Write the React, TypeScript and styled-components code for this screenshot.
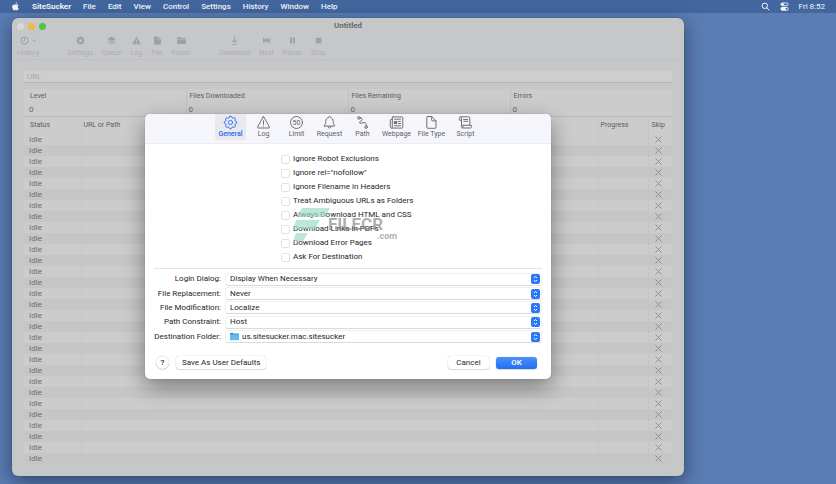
import React from "react";
import styled, { createGlobalStyle, css } from "styled-components";
import { FaApple } from "react-icons/fa";

const GlobalStyle = createGlobalStyle`
  *, *::before, *::after { box-sizing: border-box; }
  body { margin: 0; background: #5a7db3; }
  body, button, input, select, table {
    font-family: Roboto, "Liberation Sans", sans-serif;
    font-size: 8px;
    line-height: 10px;
  }
  button, input, select { margin: 0; padding: 0; border: 0; background: none; color: inherit; }
  svg { display: block; flex: none; }
`;

const Desktop = styled.div`
  min-height: 100vh;
  display: flex;
  flex-direction: column;
  background: #5a7db3;
  overflow: hidden;
`;

const MenuBar = styled.nav`
  height: 13px;
  display: flex;
  align-items: center;
  gap: 12px;
  padding: 0 11px;
  background: #42679f;
  color: #f4f7fc;
`;

const MenuItem = styled.button<{ $strong?: boolean }>`
  font-weight: ${(p) => (p.$strong ? 700 : 500)};
  white-space: nowrap;
`;

const MenuStatus = styled.div`
  margin-left: auto;
  display: flex;
  align-items: center;
  gap: 10px;
`;

const Clock = styled.time`
  font-weight: 400;
`;

const Workspace = styled.main`
  flex: 1;
  display: flex;
  padding: 5px 152px 8px 12px;
`;

const AppWindow = styled.section`
  position: relative;
  flex: 1;
  min-width: 0;
  display: flex;
  flex-direction: column;
  border-radius: 6px;
  background: #c6c7c9;
  color: #6a6a6b;
  box-shadow: 0 0 1px rgba(0, 0, 0, 0.5), 0 6px 20px rgba(15, 25, 50, 0.55);
`;

const TitleBar = styled.header`
  height: 16px;
  display: grid;
  grid-template-columns: 1fr auto 1fr;
  align-items: center;
  padding: 0 5px;
`;

const TrafficLights = styled.div`
  display: flex;
  gap: 4px;
`;

const Light = styled.button<{ $color: string }>`
  width: 7px;
  height: 7px;
  border-radius: 50%;
  background: ${(p) => p.$color};
`;

const WindowTitle = styled.h1`
  margin: 0;
  font-size: 8px;
  font-weight: 700;
  line-height: 10px;
  color: #69696b;
`;

const Toolbar = styled.div`
  height: 26px;
  display: flex;
  gap: 28px;
  padding: 0 5px;
  border-bottom: 1px solid #bfc0c1;
`;

const ToolGroup = styled.div`
  display: flex;
  gap: 9px;
`;

const Tool = styled.button`
  display: flex;
  flex-direction: column;
  align-items: center;
  justify-content: center;
  gap: 4px;
  font-size: 7px;
  line-height: 9px;
  color: #adaeaf;
  svg { color: #9fa0a1; }
`;

const Content = styled.div`
  display: flex;
  flex-direction: column;
  padding: 11px 12px 12px;
`;

const UrlInput = styled.input`
  height: 12px;
  margin-bottom: 6px;
  padding: 0 3px;
  background: #cecece;
  border-bottom: 1px solid #b6b6b6;
  color: #666;
  &::placeholder { color: #a9a9a9; opacity: 1; }
`;

const DataTable = styled.table`
  width: 100%;
  table-layout: fixed;
  border-collapse: collapse;
  background: #cccccc;
  th, td {
    padding: 0 6px;
    text-align: left;
    white-space: nowrap;
  }
  th { font-size: 7px; font-weight: 400; line-height: 11px; color: #5c5c5c; }
`;

const SummaryTable = styled(DataTable)`
  border-bottom: 1px solid #b8b8b8;
  th { height: 15px; }
  td { height: 12px; padding-left: 5px; }
  th + th, td + td { border-left: 1px solid #c1c1c1; padding-left: 3px; }
  td + td { padding-left: 2px; }
`;

const FilesTable = styled(DataTable)`
  th { height: 17px; }
  td { height: 11px; padding-left: 5px; line-height: 11px; color: #6c6c6c; }
  th + th, td + td { border-left: 1px solid #c5c5c5; padding-left: 2px; }
  th:last-child { padding: 0 3px; }
  td:last-child { padding-left: 5px; }
  tbody tr:nth-child(even) { background: #c6c6c6; }
`;

const StatusCol = styled.col`width: 57px;`;
const ProgressCol = styled.col`width: 50px;`;
const SkipCol = styled.col`width: 24px;`;

const SkipButton = styled.button`
  display: block;
  width: 9px;
  height: 9px;
  color: #8f8f8f;
`;

const Sheet = styled.div`
  position: absolute;
  top: 96px;
  left: 50%;
  transform: translateX(-50%);
  width: 406px;
  border-radius: 5px;
  background: #fff;
  color: #262626;
  box-shadow: 0 0 1px rgba(0, 0, 0, 0.4), 0 8px 22px rgba(0, 0, 0, 0.4);
`;

const Tabs = styled.div`
  height: 30px;
  display: flex;
  justify-content: center;
  align-items: flex-start;
  gap: 2px;
  border-bottom: 1px solid #ececf0;
  border-radius: 5px 5px 0 0;
  background: #f5f6fb;
`;

const Tab = styled.button<{ $wide?: boolean }>`
  width: ${(p) => (p.$wide ? 33 : 31)}px;
  height: 26px;
  display: flex;
  flex-direction: column;
  align-items: center;
  justify-content: flex-end;
  padding-bottom: 1px;
  border-radius: 0 0 3px 3px;
  font-size: 7px;
  font-weight: 400;
  line-height: 9px;
  white-space: nowrap;
  color: #5f5f63;
  svg { color: #606165; }
  &[aria-selected="true"] {
    background: #e9eaef;
    color: #2467e8;
    font-weight: 500;
    svg { color: #2467e8; }
  }
`;

const Panel = styled.div`
  display: flex;
  flex-direction: column;
  padding: 8px 9px 10px;
`;

const Checks = styled.div`
  position: relative;
  align-self: flex-start;
  margin-left: 127px;
`;

const CheckRow = styled.label`
  height: 14px;
  display: flex;
  align-items: center;
  gap: 3px;
  white-space: nowrap;
`;

const CheckBox = styled.input`
  appearance: none;
  width: 9px;
  height: 9px;
  border: 1px solid #e2e2e2;
  border-radius: 2px;
  background: #fff;
  &:checked { background: #2d7bf6; }
`;

const Watermark = styled.div`
  position: absolute;
  top: 56px;
  left: 12px;
  display: flex;
  pointer-events: none;
  color: rgba(120, 120, 120, 0.6);
`;

const WatermarkText = styled.div`
  margin: 6px 0 0 -2px;
  display: flex;
  flex-direction: column;
  font-size: 17px;
  font-weight: 700;
  line-height: 20px;
`;

const WatermarkSuffix = styled.span`
  align-self: flex-end;
  margin: -3px -14px 0 0;
  font-size: 9px;
  line-height: 10px;
`;

const Options = styled.div`
  height: 77px;
  display: grid;
  grid-auto-rows: 1fr;
  margin-top: 4px;
  padding: 3px 0 1px;
  border-top: 1px solid #e4e4e4;
`;

const Option = styled.div`
  display: grid;
  grid-template-columns: 67px 1fr;
  align-items: center;
  gap: 4px;
`;

const OptionLabel = styled.label`
  text-align: right;
  white-space: nowrap;
`;

const SelectBox = styled.div`
  height: 13px;
  display: flex;
  align-items: center;
  padding: 0 1px 0 4px;
  border: 1px solid #f0f0f0;
  border-bottom-color: #d9d9d9;
  border-radius: 3px;
  gap: 3px;
`;

const Select = styled.select`
  appearance: none;
  flex: 1;
  min-width: 0;
  height: 11px;
  outline: none;
`;

const Stepper = styled.span`
  width: 9px;
  height: 10px;
  display: grid;
  place-items: center;
  border-radius: 2px;
  background: #2b79f5;
  color: #fff;
`;

const Actions = styled.footer`
  display: flex;
  align-items: center;
  gap: 7px;
  margin-top: 11px;
  padding: 0 5px 0 2px;
`;

const PushButton = styled.button<{ $primary?: boolean }>`
  height: 13px;
  min-width: 41px;
  padding: 0 6px;
  border-radius: 3px;
  white-space: nowrap;
  box-shadow: 0 0 1px rgba(0, 0, 0, 0.35), 0 1px 1px rgba(0, 0, 0, 0.12);
  ${(p) =>
    p.$primary &&
    css`
      height: 12px;
      background: linear-gradient(#4a91fa, #226ff2);
      color: #fff;
      font-weight: 500;
    `}
`;

const HelpButton = styled(PushButton)`
  width: 13px;
  min-width: 0;
  padding: 0;
  border-radius: 50%;
  font-weight: 500;
`;

const Spacer = styled.span`flex: 1;`;

type IconProps = { children: React.ReactNode };
const LineIcon = ({ children }: IconProps) => (
  <svg width="15" height="15" viewBox="0 0 15 15" fill="none" stroke="currentColor"
    strokeWidth=".9" strokeLinecap="round" strokeLinejoin="round" aria-hidden="true">{children}</svg>
);
const SolidIcon = ({ children }: IconProps) => (
  <svg width="9" height="9" viewBox="0 0 9 9" fill="currentColor" aria-hidden="true">{children}</svg>
);

const gearOutline = Array.from({ length: 32 }, (_, i) => {
  const angle = ((i - 0.5) * Math.PI) / 16;
  const radius = i % 4 < 2 ? 6.3 : 5;
  return `${(7.5 + radius * Math.sin(angle)).toFixed(2)},${(7.5 - radius * Math.cos(angle)).toFixed(2)}`;
}).join(" ");

const tabs: { label: string; wide?: boolean; icon: React.ReactNode }[] = [
  { label: "General", icon: <LineIcon><polygon points={gearOutline} /><circle cx="7.5" cy="7.5" r="2.1" /></LineIcon> },
  { label: "Log", icon: <LineIcon><path d="M7.1 2 1.6 12.1c-.2.5 0 .9.5.9h10.8c.5 0 .7-.4.5-.9L7.9 2c-.2-.4-.6-.4-.8 0zM7.5 5.8v3.600M7.5 11.100v.1" /></LineIcon> },
  { label: "Limit", icon: <LineIcon><circle cx="7.5" cy="7.5" r="6" /><text x="7.5" y="10" textAnchor="middle" fontSize="7" fill="currentColor" stroke="none">50</text></LineIcon> },
  { label: "Request", icon: <LineIcon><path d="M2.600 11.100h9.800c.4 0 .5-.5.2-.8-1-.9-1.400-1.700-1.400-3.800 0-2.200-1.100-3.500-2.600-3.800 0-.8-.4-1.200-1.100-1.200s-1.100.4-1.100 1.200c-1.500.3-2.600 1.600-2.600 3.800 0 2.100-.4 2.900-1.400 3.800-.3.300-.2.800.2.800zM6 11.400c.1 1.100.7 1.700 1.500 1.700S8.900 12.500 9 11.400" /></LineIcon> },
  { label: "Path", icon: <LineIcon><circle cx="3.900" cy="2.900" r="1.300" /><circle cx="11.100" cy="12.100" r="1.300" /><path d="M5.200 2.900c2.100.1 2.900 1.300 1.500 2.500L5.200 6.500c-1.300 1-.8 2 .6 1.700l3.200-.6c2-.3 2.500 1.100 2.100 3.100" /></LineIcon> },
  { label: "Webpage", wide: true, icon: <LineIcon><path d="M4 1.900h9c.5 0 .8.300.8.800v9.600c0 .5-.3.800-.8.800H2.600c-.8 0-1.300-.6-1.300-1.400V5.200c0-.5.300-.8.800-.8h1.200V2.600c0-.4.300-.7.700-.7zM3.300 4.400v7.500c0 .5-.2.900-.5 1.200M5.500 4.200h6M9.300 6.500h2.200M9.300 8.500h2.200M5.500 10.800h6" /><path d="M5.600 6.600h2v2h-2z" fill="currentColor" /></LineIcon> },
  { label: "File Type", wide: true, icon: <LineIcon><path d="M3.700 1.500h4l4.300 4.300v6.500c0 .6-.4 1-1 1H3.900c-.7 0-1.100-.4-1.100-1V2.500c0-.6.300-1 .9-1zM7.700 1.700v3.200c0 .7.300 1 1 1h3.200" /></LineIcon> },
  { label: "Script", icon: <LineIcon><path d="M3.500 5.300v5M3.500 5.300H1.900c-.4 0-.5-.2-.5-.5V3.300c0-.9.600-1.500 1.400-1.500h7.700c.8 0 1.300.5 1.300 1.400v7.100M2.800 1.800c.5.300.7.700.7 1.400v2.100M5 10.300h8.100c.4 0 .5.200.5.500v.7c0 .9-.5 1.500-1.400 1.500H4.900c-.9 0-1.400-.6-1.400-1.500v-1.200M5 10.300v1.200c0 .9-.4 1.300-.9 1.400M5.700 4.500h4M5.700 6.300h4" /></LineIcon> },
];

const gearSolid = <SolidIcon><path fillRule="evenodd" d="M3.700.5h1.600l.4 1 1-.4 1.100 1.100-.4 1 1.100.5v1.600l-1.100.4.4 1.100-1.100 1.100-1-.4-.4 1.100H3.700l-.4-1.100-1.100.4-1.100-1.100.4-1.100L.5 5.300V3.700l1-.5-.4-1 1.100-1.100 1.100.4zM4.500 3a1.500 1.500 0 1 0 0 3 1.500 1.500 0 0 0 0-3z" /></SolidIcon>;

const toolGroups: { label: string; icon: React.ReactNode }[][] = [
  [{ label: "History", icon: <svg width="17" height="9" viewBox="0 0 17 9" fill="none" stroke="currentColor" aria-hidden="true"><circle cx="4.500" cy="4.500" r="3.500" /><path d="M4.500 2v2.700H3M12.500 4l1.500 1.200L15.500 4" /></svg> }],
  [
    { label: "Settings", icon: gearSolid },
    { label: "Queue", icon: <SolidIcon><path d="M4.500.8 8.800 3 4.500 5.200.200 3zM.9 4.400l3.600 1.900 3.600-1.900.7.500-4.300 2.300L.2 4.900zM.9 6.200l3.600 1.900 3.600-1.900.4.400-4 2.200-4-2.200z" /></SolidIcon> },
    { label: "Log", icon: <SolidIcon><path fillRule="evenodd" d="M4.500.6 8.800 8.300H.2zM4 3.300v2.500h1V3.300zM4 6.500v.9h1v-.9z" /></SolidIcon> },
    { label: "File", icon: <SolidIcon><path d="M1 .5h3.500v3H8v5H1zM5.200.5 8 2.900H5.200z" /></SolidIcon> },
    { label: "Folder", icon: <SolidIcon><path d="M.2 1h3l.8 1h4.800v1H.2zM.2 3.600h8.600V8H.2z" /></SolidIcon> },
  ],
  [
    { label: "Download", icon: <SolidIcon><path d="M4 .5h1v5l1.500-1.400.6.600-2.600 2.600L1.900 4.700l.6-.6L4 5.500zM2 8h5v.7H2z" /></SolidIcon> },
    { label: "Next", icon: <SolidIcon><path d="M1 1.500 4.200 4V1.500L7.200 4V1.500h1v6h-1V5L4.200 7.500V5L1 7.500z" /></SolidIcon> },
    { label: "Pause", icon: <SolidIcon><path d="M2 1.500h2v6H2zM5 1.500h2v6H5z" /></SolidIcon> },
    { label: "Stop", icon: <SolidIcon><path d="M1.800 1.800h5.600v5.600H1.800z" /></SolidIcon> },
  ],
];

const menus = ["File", "Edit", "View", "Control", "Settings", "History", "Window", "Help"];

const checks = [
  "Ignore Robot Exclusions",
  'Ignore rel="nofollow"',
  "Ignore Filename in Headers",
  "Treat Ambiguous URLs as Folders",
  "Always Download HTML and CSS",
  "Download Links in PDFs",
  "Download Error Pages",
  "Ask For Destination",
];

const options = [
  { id: "login", label: "Login Dialog:", value: "Display When Necessary" },
  { id: "replacement", label: "File Replacement:", value: "Never" },
  { id: "modification", label: "File Modification:", value: "Localize" },
  { id: "constraint", label: "Path Constraint:", value: "Host" },
  { id: "destination", label: "Destination Folder:", value: "us.sitesucker.mac.sitesucker", folder: true },
];

const fileRows = Array.from({ length: 30 }, (_, i) => i);

const FolderIcon = () => (
  <svg width="9" height="9" viewBox="0 0 9 9" aria-hidden="true">
    <path d="M0 1.300c0-.4.200-.6.600-.6h2.300l.8.800h4.700c.4 0 .6.200.6.600V4H0z" fill="#3d9ed8" />
    <path d="M0 2.700h9v5c0 .4-.2.600-.6.600H.6c-.4 0-.6-.2-.6-.6z" fill="#62bdf0" />
  </svg>
);

export default function App() {
  return (
    <Desktop>
      <GlobalStyle />
      <MenuBar aria-label="Menu bar">
        <FaApple size={9} />
        <MenuItem $strong>SiteSucker</MenuItem>
        {menus.map((name) => <MenuItem key={name}>{name}</MenuItem>)}
        <MenuStatus>
          <svg width="9" height="9" viewBox="0 0 9 9" fill="none" stroke="currentColor" aria-hidden="true">
            <circle cx="3.800" cy="3.800" r="2.700" /><path d="m5.800 5.800 2.300 2.300" strokeLinecap="round" />
          </svg>
          <svg width="9" height="9" viewBox="0 0 9 9" aria-hidden="true">
            <rect x=".9" y="1" width="7.200" height="2.700" rx="1.300" fill="none" stroke="currentColor" strokeWidth=".9" />
            <circle cx="2.600" cy="2.300" r="1.300" fill="currentColor" />
            <rect x=".5" y="4.900" width="8" height="3.800" rx="1.800" fill="currentColor" />
            <circle cx="6.600" cy="6.800" r="1.100" fill="#42679f" />
          </svg>
          <Clock>Fri 8:52</Clock>
        </MenuStatus>
      </MenuBar>
      <Workspace>
        <AppWindow aria-label="Untitled">
          <TitleBar>
            <TrafficLights>
              <Light $color="#d8d8da" aria-label="Close" />
              <Light $color="#f6b73e" aria-label="Minimize" />
              <Light $color="#50c544" aria-label="Zoom" />
            </TrafficLights>
            <WindowTitle>Untitled</WindowTitle>
          </TitleBar>
          <Toolbar>
            {toolGroups.map((group) => (
              <ToolGroup key={group[0].label}>
                {group.map((tool) => <Tool key={tool.label}>{tool.icon}{tool.label}</Tool>)}
              </ToolGroup>
            ))}
          </Toolbar>
          <Content>
            <UrlInput placeholder="URL" aria-label="URL" />
            <SummaryTable>
              <thead><tr><th>Level</th><th>Files Downloaded</th><th>Files Remaining</th><th>Errors</th></tr></thead>
              <tbody><tr><td>0</td><td>0</td><td>0</td><td>0</td></tr></tbody>
            </SummaryTable>
            <FilesTable>
              <colgroup><StatusCol /><col /><ProgressCol /><SkipCol /></colgroup>
              <thead><tr><th>Status</th><th>URL or Path</th><th>Progress</th><th>Skip</th></tr></thead>
              <tbody>
                {fileRows.map((row) => (
                  <tr key={row}>
                    <td>Idle</td><td /><td />
                    <td>
                      <SkipButton aria-label="Skip">
                        <svg width="9" height="9" viewBox="0 0 9 9" stroke="currentColor" aria-hidden="true"><path d="m1.500 1.500 6 6M7.500 1.500l-6 6" /></svg>
                      </SkipButton>
                    </td>
                  </tr>
                ))}
              </tbody>
            </FilesTable>
          </Content>
          <Sheet role="dialog" aria-label="Settings">
            <Tabs role="tablist">
              {tabs.map((tab) => (
                <Tab key={tab.label} role="tab" aria-selected={tab.label === "General"} $wide={tab.wide}>
                  {tab.icon}{tab.label}
                </Tab>
              ))}
            </Tabs>
            <Panel>
              <Checks>
                {checks.map((label) => <CheckRow key={label}><CheckBox type="checkbox" />{label}</CheckRow>)}
                <Watermark>
                  <svg width="37" height="36" viewBox="0 0 37 36" fill="#9fdcc4" fillOpacity=".7" aria-hidden="true">
                    <path d="M9 0h28l-5 9H4zM3 12h24l-5 9H0zM3 25h12l-5 8H0z" />
                  </svg>
                  <WatermarkText>FILECR<WatermarkSuffix>.com</WatermarkSuffix></WatermarkText>
                </Watermark>
              </Checks>
              <Options>
                {options.map((option) => (
                  <Option key={option.id}>
                    <OptionLabel htmlFor={option.id}>{option.label}</OptionLabel>
                    <SelectBox>
                      {option.folder && <FolderIcon />}
                      <Select id={option.id}><option>{option.value}</option></Select>
                      <Stepper>
                        <svg width="7" height="8" viewBox="0 0 7 8" fill="none" stroke="currentColor" aria-hidden="true">
                          <path d="m2 3 1.500-1.500L5 3M2 5l1.500 1.500L5 5" />
                        </svg>
                      </Stepper>
                    </SelectBox>
                  </Option>
                ))}
              </Options>
              <Actions>
                <HelpButton aria-label="Help">?</HelpButton>
                <PushButton>Save As User Defaults</PushButton>
                <Spacer />
                <PushButton>Cancel</PushButton>
                <PushButton $primary>OK</PushButton>
              </Actions>
            </Panel>
          </Sheet>
        </AppWindow>
      </Workspace>
    </Desktop>
  );
}
